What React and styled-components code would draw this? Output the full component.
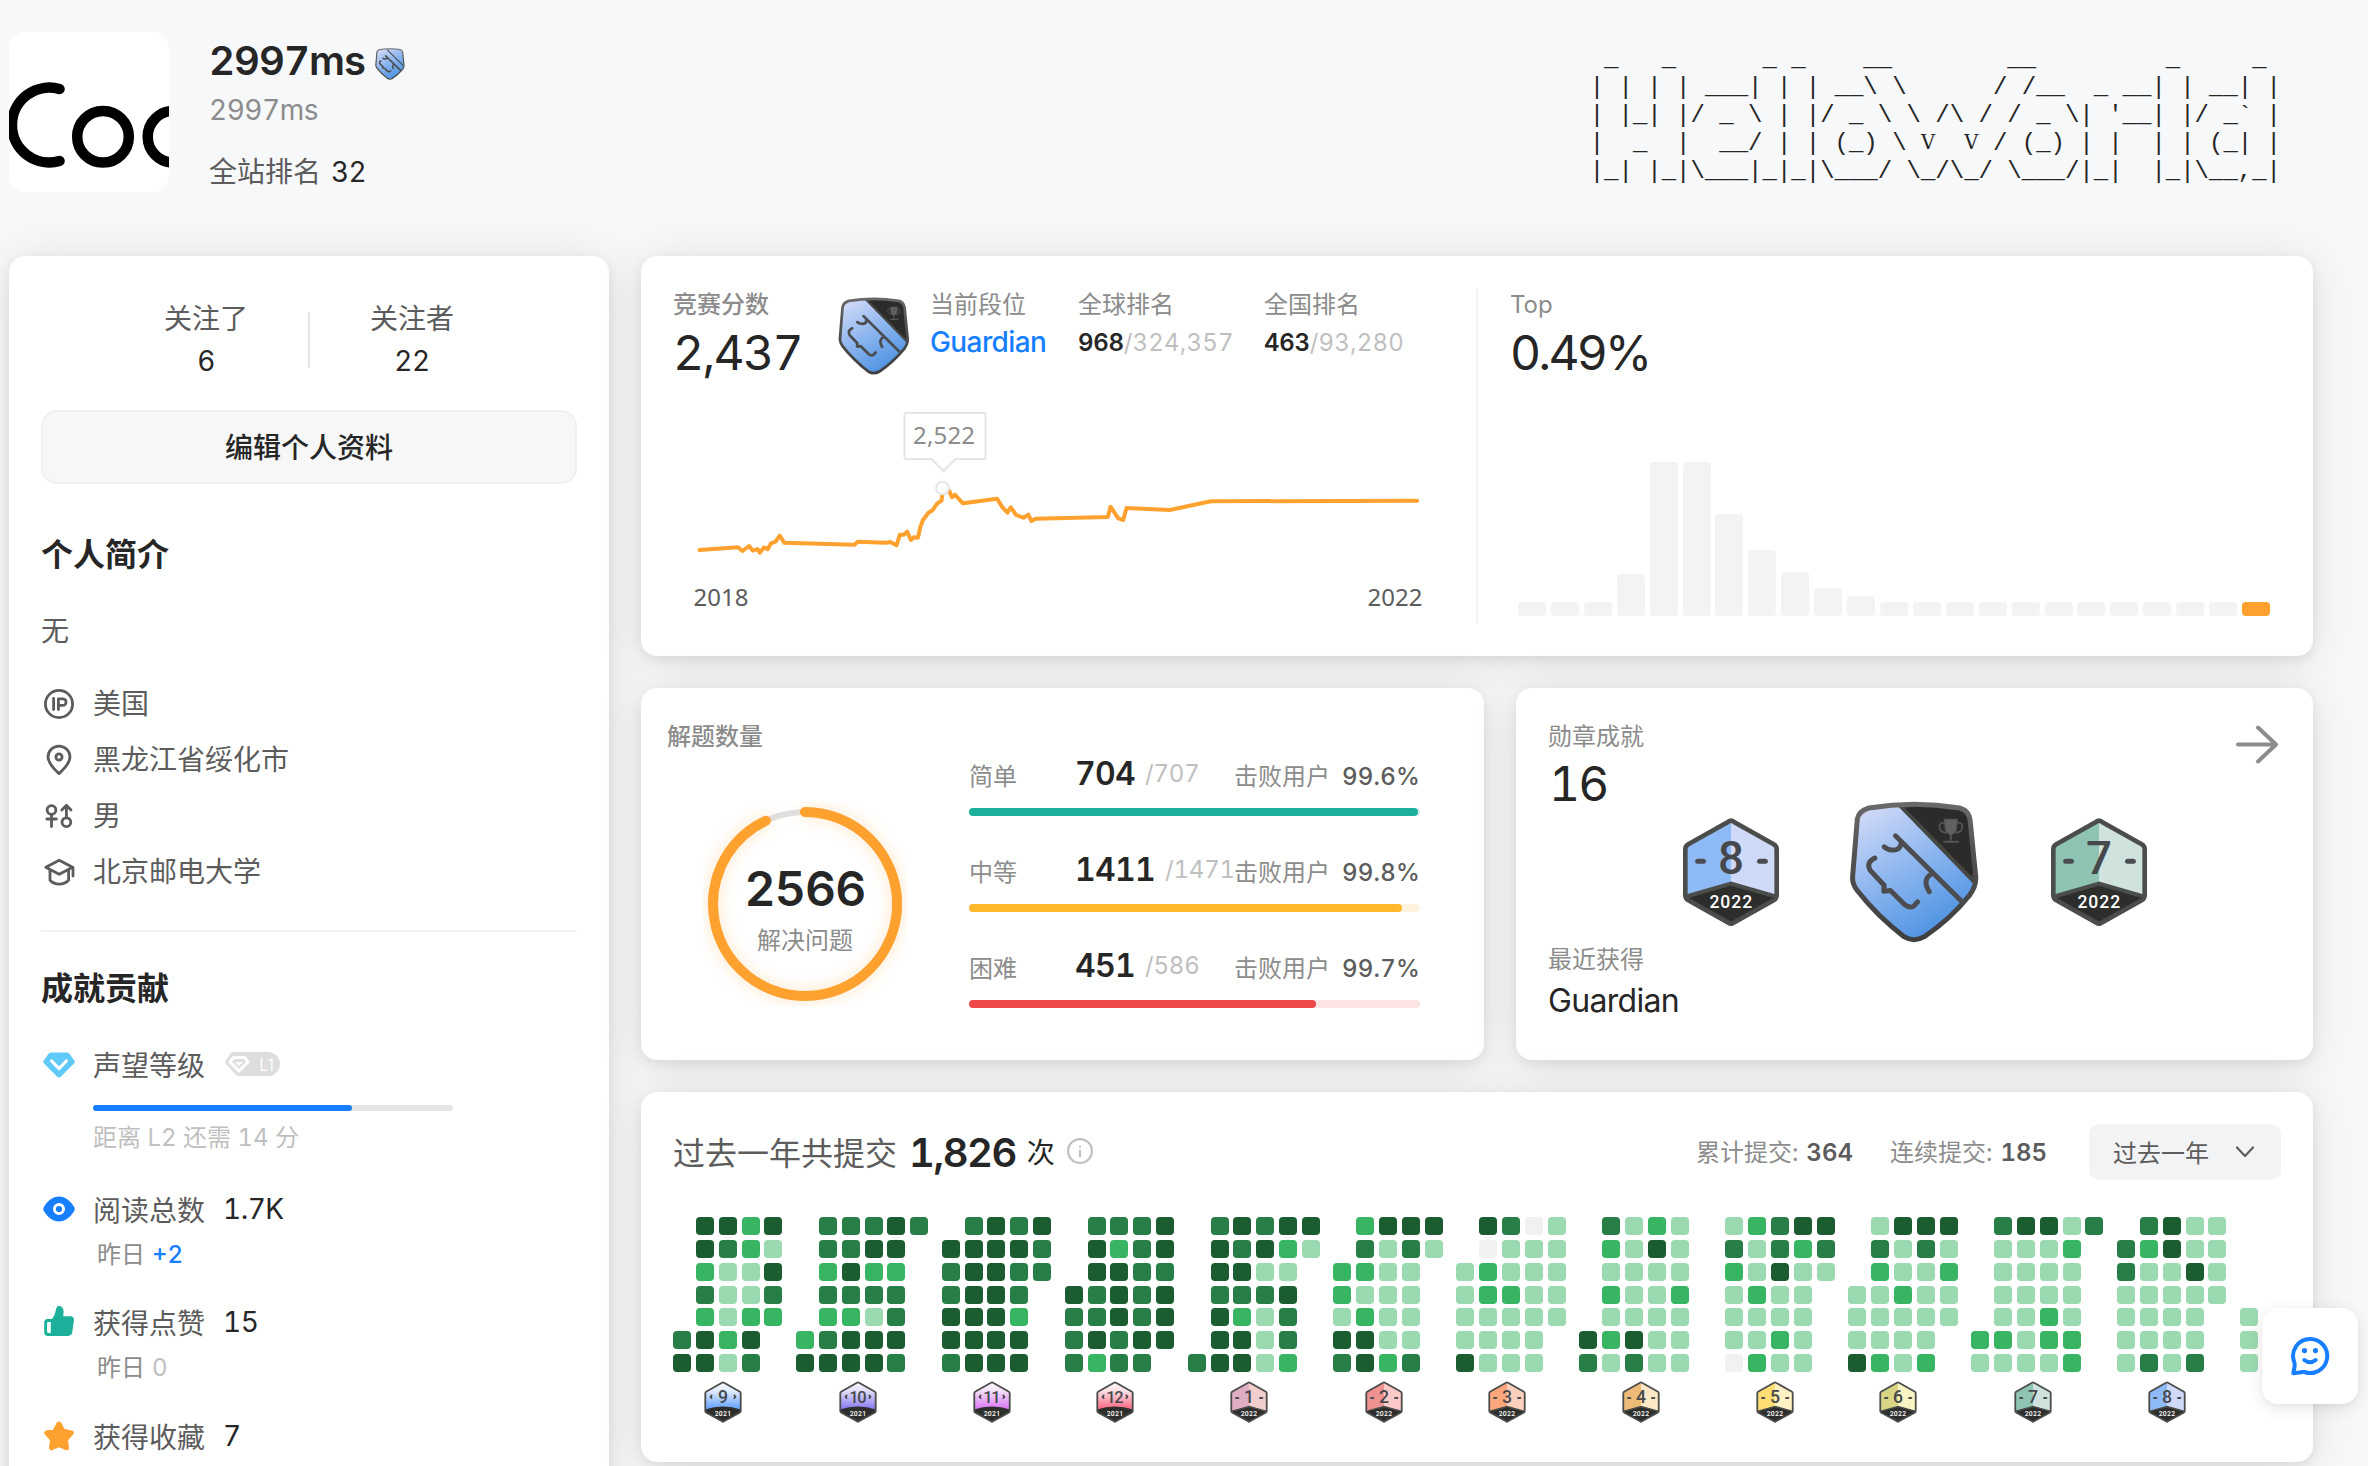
import React from "react";
import styled, { createGlobalStyle, css } from "styled-components";

const GlobalStyle = createGlobalStyle`
  *, *::before, *::after { box-sizing: border-box; }
  html, body { margin: 0; padding: 0; }
  body {
    background: #f7f8fa;
    color: #262626;
    font-family: Inter, "Noto Sans CJK SC", sans-serif;
    font-size: 28px;
    font-variant-numeric: tabular-nums;
    -webkit-font-smoothing: antialiased;
  }
  svg { display: block; flex: none; }
`;

const Page = styled.div`
  width: 2368px;
  height: 1466px;
  overflow: hidden;
  padding-left: 9px;
  background: #f7f8fa;
`;

/* ---------- header ---------- */

const Header = styled.header`
  display: flex;
  width: 2304px;
  height: 256px;
  padding-top: 32px;
`;

const Avatar = styled.div`
  width: 160px;
  height: 160px;
  border-radius: 16px;
  background: #fff;
  overflow: hidden;
  flex: none;
`;

const Identity = styled.div`
  margin-left: 40px;
  flex: 1;
`;

const DisplayName = styled.h1`
  display: flex;
  align-items: center;
  gap: 10px;
  margin: 0;
  height: 58px;
  font-size: 40px;
  font-weight: 600;
  letter-spacing: -0.9px;
  line-height: 58px;
  svg { margin-top: 5px; }
`;

const Handle = styled.div`
  color: #8c8c8c;
  line-height: 40px;
  letter-spacing: -0.5px;
`;

const SiteRank = styled.div`
  display: flex;
  gap: 10px;
  margin-top: 20px;
  color: #5c5c5c;
  line-height: 44px;
  strong { color: #262626; font-weight: 400; letter-spacing: -0.6px; }
`;

const AsciiArt = styled.pre`
  margin: 14px 32px 0 0;
  font-family: "Liberation Mono", monospace;
  font-size: 24px;
  line-height: 28px;
  color: #262626;
`;

const SerifV = styled.span`
  display: inline-block;
  width: 14.4px;
  text-align: center;
  line-height: 20px;
  vertical-align: 1px;
  font-family: "DejaVu Serif", serif;
  font-size: 19.5px;
`;

/* ---------- shared ---------- */

const Main = styled.main`
  display: grid;
  grid-template-columns: 600px 1672px;
  column-gap: 32px;
`;

const Card = styled.section`
  background: #fff;
  border-radius: 16px;
  box-shadow: 0 4px 12px rgba(0, 0, 0, 0.08), 0 4px 48px rgba(0, 0, 0, 0.1);
`;

const Caption = styled.div`
  font-size: 24px;
  line-height: 36px;
  color: #8c8c8c;
  white-space: nowrap;
  font-weight: ${(p) => (p.$medium ? 500 : 400)};
`;

const BigNumber = styled.div`
  padding-left: ${(p) => p.$indent || 0}px;
  font-size: 48px;
  line-height: ${(p) => p.$line || 60}px;
  letter-spacing: ${(p) => p.$track || 0}px;
`;

/* ---------- profile column ---------- */

const ProfileCard = styled(Card)`
  height: 1300px;
  padding: 41px 32px;
`;

const Follow = styled.div`
  display: grid;
  grid-template-columns: 82px 2px 82px;
  justify-content: center;
  column-gap: 61px;
  text-align: center;
`;

const FollowStat = styled.div`
  display: flex;
  flex-direction: column;
  align-items: center;
  color: #5c5c5c;
  line-height: 44px;
  white-space: nowrap;
  strong { display: block; color: #262626; font-weight: 400; line-height: 40px; letter-spacing: -0.5px; }
`;

const FollowRule = styled.div`
  width: 2px;
  height: 56px;
  margin-top: 15px;
  background: #e5e5e5;
`;

const EditButton = styled.button`
  display: block;
  width: 100%;
  height: 74px;
  margin-top: 29px;
  padding: 0 0 3px;
  border: 2px solid #f0f0f0;
  border-radius: 16px;
  background: #f7f7f7;
  color: #262626;
  font: 500 28px Inter, "Noto Sans CJK SC", sans-serif;
`;

const SectionTitle = styled.h2`
  margin: ${(p) => p.$top}px 0 0;
  font-size: 32px;
  font-weight: 600;
  line-height: 44px;
`;

const Bio = styled.p`
  margin: 34px 0 25px;
  line-height: 40px;
  color: #5c5c5c;
`;

const InfoRow = styled.div`
  display: flex;
  align-items: center;
  gap: 18px;
  height: 56px;
  padding-left: 2px;
  line-height: 40px;
  color: #5c5c5c;
  span { margin-top: -1px; }
`;

const Rule = styled.hr`
  height: 2px;
  margin: 30px 0 0;
  border: 0;
  background: #f2f2f2;
`;

const Contribution = styled.div`
  display: flex;
  align-items: center;
  gap: 18px;
  height: 44px;
  margin-top: ${(p) => p.$top}px;
  padding-left: 2px;
  color: #5c5c5c;
  strong { color: #262626; font-weight: 400; letter-spacing: -0.5px; }
`;

const LevelTrack = styled.div`
  width: 360px;
  height: 6px;
  margin: 19px 0 9px 52px;
  border-radius: 3px;
  background: #e5e5e5;
`;

const LevelFill = styled.div`
  width: 259px;
  height: 6px;
  border-radius: 3px;
  background: #177fff;
`;

const LevelHint = styled(Caption)`
  padding-left: 52px;
  color: #bfbfbf;
`;

const Yesterday = styled(Caption)`
  display: flex;
  gap: 7px;
  margin-top: 6px;
  padding-left: 56px;
  span { color: ${(p) => (p.$gain ? "#177fff" : "#bfbfbf")}; font-weight: ${(p) => (p.$gain ? 500 : 400)}; }
`;

/* ---------- dashboard column ---------- */

const Dashboard = styled.div`
  display: flex;
  flex-direction: column;
  gap: 32px;
`;

const ContestCard = styled(Card)`
  display: grid;
  grid-template-columns: 835px 2px 1fr;
  height: 400px;
  padding: 31px 0 32px;
`;

const RatingPane = styled.div`
  padding-left: 32px;
`;

const RatingHead = styled.div`
  display: grid;
  grid-template-columns: 164px 93px 148px 186px auto;
  height: 113px;
  & > svg { margin: 10px 0 0 1px; }
`;

const League = styled.div`
  font-size: 28px;
  line-height: 39px;
  letter-spacing: -0.6px;
  font-weight: 500;
  color: #177fff;
`;

const RankValue = styled.div`
  font-size: 24px;
  line-height: 40px;
  letter-spacing: ${(p) => p.$track}px;
  color: #bfbfbf;
  white-space: nowrap;
  strong { color: #262626; font-weight: 600; letter-spacing: -0.3px; }
`;

const PaneRule = styled.div`
  width: 2px;
  height: 336px;
  margin-top: 1px;
  background: #f2f3f4;
`;

const TopPane = styled.div`
  display: flex;
  flex-direction: column;
  padding: 0 43px 8px 32px;
`;

const Histogram = styled.div`
  display: flex;
  align-items: flex-end;
  justify-content: space-between;
  flex: 1;
  padding-left: 8px;
`;

const HistBar = styled.div`
  width: 28px;
  height: ${(p) => p.$h}px;
  border-radius: 4px;
  background: ${(p) => (p.$current ? "#ffa12e" : "#f2f3f4")};
`;

const Pair = styled.div`
  display: grid;
  grid-template-columns: 843px 797px;
  column-gap: 32px;
`;

const SolvedCard = styled(Card)`
  height: 372px;
  padding: 31px 26px;
`;

const SolvedBody = styled.div`
  display: flex;
  padding: 1px 38px 0 36px;
`;

const RingBox = styled.div`
  display: grid;
  width: 204px;
  height: 204px;
  margin: 46px 62px 0 0;
  & > * { grid-area: 1 / 1; }
`;

const RingLabel = styled.div`
  padding-top: 58px;
  text-align: center;
  strong { display: block; margin-bottom: 5px; font-size: 48px; font-weight: 600; line-height: 58px; letter-spacing: -0.8px; }
`;

const Levels = styled.div`
  display: flex;
  flex-direction: column;
  gap: 36px;
  width: 451px;
`;

const LevelRow = styled.div`
  display: grid;
  grid-template-columns: 106px 1fr auto;
  align-items: center;
  height: 40px;
  margin-bottom: 12px;
  white-space: nowrap;
`;

const LevelName = styled(Caption)`
  padding-top: 2px;
`;

const Count = styled.div`
  display: flex;
  align-items: center;
  gap: 10px;
  width: 0;
  margin-top: -6px;
  font-size: 24px;
  letter-spacing: -0.2px;
  color: #bfbfbf;
  strong { color: #262626; font-size: 32px; font-weight: 600; letter-spacing: -0.7px; }
`;

const Beats = styled(Caption)`
  display: flex;
  gap: 12px;
  padding-top: 2px;
  strong { color: #5c5c5c; font-weight: 500; letter-spacing: 0.2px; }
`;

const LevelBar = styled.div`
  height: 8px;
  border-radius: 4px;
  background: ${(p) => p.$track};
  div { height: 8px; border-radius: 4px; background: ${(p) => p.$fill}; }
`;

const MedalCard = styled(Card)`
  height: 372px;
  padding: 31px 32px;
`;

const MedalHead = styled.div`
  display: flex;
  justify-content: space-between;
  height: 82px;
  & > svg { margin: 5px 3px 0 0; }
`;

const MedalRow = styled.div`
  display: flex;
  align-items: center;
  justify-content: center;
  gap: 69.5px;
  height: 141px;
`;

const LatestMedal = styled.div`
  font-size: 32px;
  line-height: 46px;
  letter-spacing: -0.7px;
`;

const ActivityCard = styled(Card)`
  height: 370px;
  padding: 32px 32px 0;
`;

const ActivityHead = styled.div`
  display: flex;
  align-items: center;
  height: 56px;
`;

const ActivityTitle = styled.div`
  display: flex;
  align-items: center;
  flex: 1;
  margin-top: -2px;
  font-size: 32px;
  color: #5c5c5c;
  strong { margin: 2px 11px 0 12px; font-size: 40px; font-weight: 600; color: #262626; letter-spacing: -1.5px; }
  span { margin-right: 12px; font-size: 28px; color: #262626; }
`;

const Tally = styled(Caption)`
  display: flex;
  gap: 8px;
  margin: 2px ${(p) => p.$right}px 0 0;
  strong { color: #5c5c5c; font-weight: 600; }
`;

const RangeButton = styled.button`
  display: flex;
  align-items: center;
  justify-content: space-between;
  width: 192px;
  height: 56px;
  padding: 0 26px 2px 24px;
  border: 0;
  border-radius: 10px;
  background: #f2f3f4;
  color: #5c5c5c;
  font: 400 24px Inter, "Noto Sans CJK SC", sans-serif;
`;

const Heatmap = styled.div`
  display: flex;
  gap: 13.53px;
  margin-top: 37px;
`;

const Month = styled.div`
  display: flex;
  flex-direction: column;
  align-items: center;
  & > svg { margin: 9px 9px 0 0; }
`;

const Days = styled.div`
  display: grid;
  grid-template-columns: repeat(${(p) => p.$cols}, 18px);
  grid-auto-rows: 18px;
  gap: 4.87px;
`;

const dayColors = { D: "#1b5c31", M: "#277e46", L: "#38b562", P: "#9bd9b0", G: "#f1f1f1" };

const Day = styled.i`
  border-radius: 4px;
  ${(p) => dayColors[p.$level] && css`background: ${dayColors[p.$level]};`}
`;

const FeedbackButton = styled.button`
  position: fixed;
  left: 2262px;
  top: 1308px;
  display: grid;
  place-items: center;
  width: 96px;
  height: 96px;
  padding: 0;
  border: 0;
  border-radius: 16px;
  background: #fff;
  box-shadow: 0 4px 16px rgba(0, 0, 0, 0.1), 0 2px 6px rgba(0, 0, 0, 0.04);
`;

/* ---------- drawings ---------- */

function AvatarArt() {
  return (
    <svg width="160" height="160" viewBox="0 0 160 160" fill="none" stroke="#000" strokeWidth="10.5" strokeLinecap="round">
      <path d="M50.5 57 A37.4 37.4 0 1 0 50.5 129" />
      <circle cx="94" cy="104.7" r="25.8" />
      <circle cx="164.5" cy="104.7" r="25.8" />
    </svg>
  );
}

function Shield({ width, height, id, plain }) {
  return (
    <svg width={width} height={height} viewBox="535 33 395 428" preserveAspectRatio="none" fill="none">
      <defs>
        <linearGradient id={`${id}-face`} x1="0.1" y1="0" x2="0.65" y2="1">
          <stop offset="0" stopColor="#d9def8" />
          <stop offset="0.5" stopColor="#8db6ef" />
          <stop offset="1" stopColor="#478fe0" />
        </linearGradient>
        <linearGradient id={`${id}-rim`} x1="0" y1="0" x2="0" y2="1">
          <stop offset="0" stopColor="#696969" />
          <stop offset="0.4" stopColor="#505050" />
          <stop offset="1" stopColor="#3f3f3f" />
        </linearGradient>
        <clipPath id={`${id}-clip`}>
          <path d="M560 88Q564 64 595 54Q731 32 868 54Q896 62 900 90L917 260Q920 288 898 318Q840 390 762 442Q731 460 701 442Q620 380 560 303Q544 282 546 260Z" />
        </clipPath>
      </defs>
      <g clipPath={`url(#${id}-clip)`}>
        <rect x="535" y="33" width="395" height="428" fill={`url(#${id}-face)`} />
        {!plain && <path d="M690 48L912 276L930 30Z" fill="#2b2b29" stroke="#464645" strokeWidth="12" />}
      </g>
      <path
        d="M560 88Q564 64 595 54Q731 32 868 54Q896 62 900 90L917 260Q920 288 898 318Q840 390 762 442Q731 460 701 442Q620 380 560 303Q544 282 546 260Z"
        stroke={`url(#${id}-rim)`}
        strokeWidth="15"
      />
      <g stroke="#4b4d50" strokeWidth={plain ? 20 : 15} strokeLinecap="round" strokeLinejoin="round">
        <path d="M675 138L875 336" />
        <path d="M641 171Q654 182 672 181Q690 178 692 162" />
        <path d="M613 205Q585 219 599 242L641 287L640 305L660 303L703 346Q718 357 730 350L742 337" />
        <path d="M785 252Q754 270 777 306" />
        {plain && <path d="M700 60L900 262" strokeWidth="14" />}
      </g>
      {!plain && (
        <g fill="#606060" stroke="#565656">
          <path d="M822 88H862L858 122Q842 148 826 122Z" strokeWidth="3" />
          <path d="M822 98Q803 98 809 117Q813 128 828 129M862 98Q881 98 875 117Q871 128 856 129" fill="none" strokeWidth="5" />
          <path d="M842 134V152M820 156H866" fill="none" strokeWidth="6" />
        </g>
      )}
    </svg>
  );
}

const hexOutline = "M172 94Q180 88 188 94L309 162Q318 167 318 177V315Q318 325 309 330L188 397Q180 403 172 397L51 330Q42 325 42 315V177Q42 167 51 162Z";

function MonthBadge({ month, year, left, right, width = 38, height = 42, arched, id }) {
  const small = width < 50;
  return (
    <svg width={width} height={height} viewBox="32 80 296 330" preserveAspectRatio="none" fill="none">
      <defs>
        <clipPath id={`${id}-clip`}><path d={hexOutline} /></clipPath>
        <linearGradient id={`${id}-fade`} x1="0" y1="0" x2="0" y2="1">
          <stop offset="0" stopColor="#fff" />
          <stop offset="0.25" stopColor={right} />
          <stop offset="0.7" stopColor={left} />
        </linearGradient>
      </defs>
      <g clipPath={`url(#${id}-clip)`}>
        {arched ? (
          <rect x="32" y="80" width="296" height="330" fill={`url(#${id}-fade)`} />
        ) : (
          <>
            <rect x="32" y="80" width="148" height="330" fill={left} />
            <rect x="180" y="80" width="148" height="330" fill={right} />
          </>
        )}
        {arched ? (
          <path d="M32 306Q180 256 328 306V420H32Z" fill="#2d2e2c" />
        ) : (
          <path d="M32 322L180 280L328 322V420H32Z" fill="#2d2e2c" stroke="#4b4d4a" strokeWidth="12" />
        )}
      </g>
      <path d={hexOutline} stroke="#4b4d4a" strokeWidth="14" />
      {arched ? (
        <g stroke="#454545" strokeWidth="13" strokeLinecap="round">
          <path d="M92 193L83 204L92 215" /><path d="M268 193L277 204L268 215" />
        </g>
      ) : (
        <g stroke="#4a4c50" strokeWidth="15" strokeLinecap="round">
          <path d="M79 213H97" /><path d="M266 213H284" />
        </g>
      )}
      <text x={month > 9 ? 175 : 180} y="252" textAnchor="middle" fontFamily="Roboto, Inter, sans-serif" fontSize={month > 9 ? 128 : 138}
        fontWeight="500" fill="#46484c" letterSpacing={month > 9 ? -10 : 0}>{month}</text>
      <text x="181" y={small ? 354 : 352} textAnchor="middle" fontFamily="Roboto, Inter, sans-serif" fontSize="53" fontWeight="500"
        fill="#fff" letterSpacing="3">{year}</text>
    </svg>
  );
}

const line = { fill: "none", stroke: "#5c5c5c", strokeWidth: 2.8, strokeLinecap: "round", strokeLinejoin: "round" };

const IpIcon = () => (
  <svg width="32" height="32" viewBox="0 0 32 32" {...line}>
    <circle cx="16" cy="16" r="13.6" />
    <path d="M10.6 10.5V21.6" />
    <path d="M15.4 21.6V10.8H19.8A3.2 3.2 0 0 1 19.8 17.4H15.6" />
  </svg>
);

const PinIcon = () => (
  <svg width="32" height="32" viewBox="0 0 32 32" {...line}>
    <path d="M16 29.6C11 25 5 18.500 5 13A11 10.800 0 0 1 27 13C27 18.500 21 25 16 29.600Z" />
    <circle cx="16" cy="13" r="3.100" />
  </svg>
);

const GenderIcon = () => (
  <svg width="32" height="32" viewBox="0 0 32 32" {...line}>
    <circle cx="8.500" cy="10" r="4.400" />
    <path d="M8.500 14.500V26.500M3.800 19H13.400" />
    <circle cx="23.400" cy="22.200" r="4.400" />
    <path d="M23.400 17.500V5.600M18.800 10L23.400 5.300L28 10" />
  </svg>
);

const SchoolIcon = () => (
  <svg width="32" height="32" viewBox="0 0 32 32" {...line}>
    <path d="M2.800 11.200L16.200 4.200L29.600 11.200L16.200 18.300Z" />
    <path d="M7 14.100V24.200C12 29.400 20.400 29.400 25.600 24.200V14.100" />
    <path d="M30 11.600V20.100" />
  </svg>
);

const ReputationIcon = () => (
  <svg width="32" height="32" viewBox="0 0 32 32" fill="none">
    <path d="M8 4.500H24Q25.400 4.500 26.200 5.600L31.300 12.400Q32.300 14 31 15.500L18 28.600Q16 30.400 14 28.600L1 15.500Q-.3 14 .7 12.400L5.800 5.600Q6.600 4.500 8 4.500Z" fill="#5fc9fa" />
    <path d="M8.600 13L16 20.600L23.400 13" stroke="#fff" strokeWidth="3.200" strokeLinecap="round" strokeLinejoin="round" />
  </svg>
);

const ViewsIcon = () => (
  <svg width="32" height="32" viewBox="0 0 33 32">
    <path d="M16.500 3C23 3 28.500 7.600 32 13.600Q33.400 16 32 18.400C28.500 24.400 23 29 16.500 29S4.500 24.400 1 18.400Q-.4 16 1 13.600C4.500 7.600 10 3 16.500 3Z" fill="#177fff" />
    <circle cx="16.500" cy="16" r="4.700" fill="none" stroke="#fff" strokeWidth="3" />
  </svg>
);

const ThumbIcon = () => (
  <svg width="32" height="32" viewBox="0 0 32 32">
    <path d="M15.800 -.2Q20.600 .6 20.600 5.700L20.300 10.200H27.400Q31.300 10.400 30.900 14.200L29.300 26.100Q28.700 29.900 25 29.900H4.500Q1.200 29.800 1.200 26.600V16.200Q1.200 13 4.500 12.900H9Q11.600 10 13 3.500Q13.900 -.4 15.800 -.2Z" fill="#1cb09a" />
    <path d="M5.200 15.900H7.800V27H5.200Q4.100 27 4.100 25.600V17.300Q4.100 15.900 5.200 15.900Z" fill="#fff" />
  </svg>
);

const StarIcon = () => (
  <svg width="32" height="32" viewBox="0 0 32 32">
    <path d="M16 4L19.900 11.300L28.300 12.900L22.500 19.200L23.500 27.800L16 24.400L8.500 27.800L9.500 19.200L3.700 12.900L12.100 11.300Z"
      fill="#ffa12e" stroke="#ffa12e" strokeWidth="5" strokeLinejoin="round" />
  </svg>
);

const PillSvg = styled.svg`
  margin-left: 2px;
  overflow: visible;
`;

const LevelPill = () => (
  <PillSvg width="55" height="24" viewBox="0 0 55 24">
    <path d="M8 0H43A12 12 0 0 1 43 24H14Q12 24 10.500 22.500L1 12Q-.3 10 1 8L5 2Q6 0 8 0Z" fill="#dedede" />
    <path d="M8.500 5.500H19.500L23 10L14 19L5 10Z" fill="none" stroke="#fff" strokeWidth="3" strokeLinejoin="round" />
    <path d="M10 10H18L14 14Z" fill="#fff" />
    <text x="34.500" y="19" fontFamily="Roboto, sans-serif" fontSize="19" fill="#fff" textLength="16" lengthAdjust="spacingAndGlyphs">L1</text>
  </PillSvg>
);

const ArrowIcon = () => (
  <svg width="44" height="40" viewBox="0 0 44 40" fill="none" stroke="#8c8c8f" strokeWidth="4" strokeLinecap="round" strokeLinejoin="round">
    <path d="M4 20.500H41M24 3.500L42 20.500L24 37.500" />
  </svg>
);

const InfoIcon = () => (
  <svg width="26" height="26" viewBox="0 0 26 26" fill="none" stroke="#bfbfbf" strokeWidth="2.200" strokeLinecap="round">
    <circle cx="13" cy="13" r="11.900" />
    <path d="M13 12.500V18.300M13 8.500V8.700" />
  </svg>
);

const ChevronIcon = () => (
  <svg width="20" height="14" viewBox="0 0 20 14" fill="none" stroke="#5c5c5c" strokeWidth="2.200" strokeLinecap="round" strokeLinejoin="round">
    <path d="M2 3.500L10 12L18 3.500" />
  </svg>
);

const FeedbackIcon = () => (
  <svg width="42" height="42" viewBox="0 0 42 42" fill="none" stroke="#177fff" strokeWidth="4" strokeLinecap="round" strokeLinejoin="round">
    <path d="M21 4A17 17 0 1 1 15.500 37Q13 36.600 10 37.500L4.300 38.200L5.600 31.500Q5.900 29 5.200 27A17 17 0 0 1 21 4Z" />
    <path d="M15.300 25Q21 29.400 26.700 25" />
    <path d="M15.500 15.500V15.600M26.500 15.500V15.600" strokeWidth="5.200" />
  </svg>
);

const ratingPoints =
  "700,550 738.600,547.300 743,551 749.600,546 753.400,550.700 757.800,549 760.500,552.700 764.400,547.300 768.200,549.300 771.500,543.300 776,541.700 780.300,535.700 784.700,542.700 854.900,544.700 858.200,541.700 886.700,542.700 890.600,542 897,545.300 900.400,534.700 904.300,534.700 907.600,531.700 911.400,540 914,537.300 918.500,537.700 920.700,527.300 923.500,520 929,512.700 933.300,510 937.200,504 942,500.700 943.200,492 949.800,491 952.500,497.300 955.300,494.700 963.500,503.300 997.500,498.700 1003,507.300 1008,512.700 1011.200,507.300 1016.700,515 1023.900,517.700 1028.800,514.700 1032,521 1036,518.700 1108.300,517 1111,506.700 1118.800,518.300 1123.700,520 1127,508 1170.300,510 1211.500,501.300 1417.700,500.700";

function RatingChart() {
  return (
    <svg width="771" height="224" viewBox="673.5 400 771 224" fontFamily="'Noto Sans', sans-serif" fontSize="24">
      <polyline points={ratingPoints} fill="none" stroke="#ffa12e" strokeWidth="4" strokeLinejoin="round" strokeLinecap="round" />
      <circle cx="943" cy="488" r="6.300" fill="#fff" stroke="#e5e6e8" strokeWidth="2" />
      <path d="M907 413H984Q986 413 986 415V457Q986 459 984 459H956L944 471L932 459H907Q905 459 905 457V415Q905 413 907 413Z" fill="#fff" stroke="#e5e5e5" strokeWidth="2" />
      <text x="944.500" y="444" textAnchor="middle" fill="#8c8c8c" textLength="62">2,522</text>
      <text x="694" y="606" fill="#5c5c5c" textLength="55">2018</text>
      <text x="1368" y="606" fill="#5c5c5c" textLength="55">2022</text>
    </svg>
  );
}

const RingArc = styled.circle`
  filter: drop-shadow(0 0 8px rgba(255, 161, 46, 0.3));
`;

function Ring() {
  return (
    <svg width="204" height="204" viewBox="-102 -102 204 204" fill="none">
      <circle r="92" stroke="#e0e0e0" strokeWidth="6" />
      <RingArc r="92" stroke="#ffa12e" strokeWidth="10" strokeLinecap="round" pathLength="1000" strokeDasharray="930 1000" transform="rotate(-90)" />
    </svg>
  );
}

/* ---------- data ---------- */

const levels = [
  { name: "简单", done: "704", all: "/707", beats: "99.6%", share: 0.996, fill: "#1cb09a", track: "#d4f1ed" },
  { name: "中等", done: "1411", all: "/1471", beats: "99.8%", share: 0.959, fill: "#ffb72b", track: "#fff3df" },
  { name: "困难", done: "451", all: "/586", beats: "99.7%", share: 0.77, fill: "#ee4848", track: "#fce3e4" },
];

const histogram = [14, 14, 14, 42, 154, 154, 102, 66, 44, 28, 20, 14, 14, 14, 14, 14, 14, 14, 14, 14, 14, 14, 14];

const months = [
  { m: 9, y: 2021, left: "#5a9cff", right: "#dce8fb", rows: [".DDLD", ".DMLP", ".LPPD", ".MPPM", ".LPLL", "MDLD.", "DDPM."] },
  { m: 10, y: 2021, left: "#7f6ff0", right: "#dedcf9", rows: [".MMMDM", ".MMDD.", ".LDLL.", ".MMMM.", ".LLPM.", "LMDDD.", "DDDDM."] },
  { m: 11, y: 2021, left: "#d66df2", right: "#f3dcf9", rows: [".MDMD", "DDDDM", "MDDMM", "MDDM.", "DDDL.", "DDDD.", "MDDD."] },
  { m: 12, y: 2021, left: "#fb5c7c", right: "#fbdce1", rows: [".MMMD", ".DLMD", ".DDMM", "DMDMD", "MMDMD", "MDMDD", "MLMM."] },
  { m: 1, y: 2022, left: "#dfadc4", right: "#f2cdcd", rows: [".MDMDD", ".DMDLP", ".DDPP.", ".MMMD.", ".DLPM.", ".DDPM.", "MDDPL."] },
  { m: 2, y: 2022, left: "#ee9292", right: "#fcc9c9", rows: [".LDDD", ".MPMP", "LLPP.", "LPPP.", "PLPP.", "DDPP.", "MDLM."] },
  { m: 3, y: 2022, left: "#fca67c", right: "#fdd0bd", rows: [".DMGP", ".GPPP", "PLPPP", "PLLPP", "PPPPP", "PPPP.", "DPPP."] },
  { m: 4, y: 2022, left: "#ecbb78", right: "#fce8c4", rows: [".MPLP.", ".LPDP.", ".PPPP.", ".LPPL.", ".PPPP.", "DLDPP.", "MPMPP."] },
  { m: 5, y: 2022, left: "#ffde74", right: "#fff1c4", rows: ["PLMDD", "MPMLM", "LPDPP", "PLPP.", "PPPP.", "PPLP.", "GLPP."] },
  { m: 6, y: 2022, left: "#d8d585", right: "#f9f4c2", rows: [".PDDD", ".MPMP", ".LPPL", "PPLPP", "PPPPP", "PPPP.", "DLPL."] },
  { m: 7, y: 2022, left: "#8fc4b4", right: "#cfe2de", rows: [".MDDPM", ".PPPL.", ".PPPP.", ".PPPP.", ".PPLP.", "LLPLL.", "PPPPL."] },
  { m: 8, y: 2022, left: "#8fbaf8", right: "#cfd9f8", rows: [".MDPP", "MLDPP", "MPPDP", "PPPPP", "PPPP.", "PPPP.", "PMPM."] },
  { rows: [".", ".", ".", ".", "P", "P", "P"] },
];

function App() {
  return (
    <Page>
      <GlobalStyle />
      <Header>
        <Avatar><AvatarArt /></Avatar>
        <Identity>
          <DisplayName>2997ms<Shield id="mini" width={30} height={32} plain /></DisplayName>
          <Handle>2997ms</Handle>
          <SiteRank>全站排名<strong>32</strong></SiteRank>
        </Identity>
        <AsciiArt>
          {" _   _      _ _    __        __         _     _ \n"}
          {"| | | | ___| | | __\\ \\      / /__  _ __| | __| |\n"}
          {"| |_| |/ _ \\ | |/ _ \\ \\ /\\ / / _ \\| '__| |/ _` |\n"}
          {"|  _  |  __/ | | (_) \\ "}<SerifV>V</SerifV>{"  "}<SerifV>V</SerifV>{" / (_) | |  | | (_| |\n"}
          {"|_| |_|\\___|_|_|\\___/ \\_/\\_/ \\___/|_|  |_|\\__,_|"}
        </AsciiArt>
      </Header>

      <Main>
        <ProfileCard>
          <Follow>
            <FollowStat>关注了<strong>6</strong></FollowStat>
            <FollowRule />
            <FollowStat>关注者<strong>22</strong></FollowStat>
          </Follow>
          <EditButton>编辑个人资料</EditButton>

          <SectionTitle $top={49}>个人简介</SectionTitle>
          <Bio>无</Bio>
          <InfoRow><IpIcon /><span>美国</span></InfoRow>
          <InfoRow><PinIcon /><span>黑龙江省绥化市</span></InfoRow>
          <InfoRow><GenderIcon /><span>男</span></InfoRow>
          <InfoRow><SchoolIcon /><span>北京邮电大学</span></InfoRow>
          <Rule />

          <SectionTitle $top={35}>成就贡献</SectionTitle>
          <Contribution $top={31}><ReputationIcon />声望等级<LevelPill /></Contribution>
          <LevelTrack><LevelFill /></LevelTrack>
          <LevelHint>距离 L2 还需 14 分</LevelHint>
          <Contribution $top={31}><ViewsIcon />阅读总数<strong>1.7K</strong></Contribution>
          <Yesterday $gain>昨日<span>+2</span></Yesterday>
          <Contribution $top={27}><ThumbIcon />获得点赞<strong>15</strong></Contribution>
          <Yesterday>昨日<span>0</span></Yesterday>
          <Contribution $top={28}><StarIcon />获得收藏<strong>7</strong></Contribution>
        </ProfileCard>

        <Dashboard>
          <ContestCard>
            <RatingPane>
              <RatingHead>
                <div>
                  <Caption $medium>竞赛分数</Caption>
                  <BigNumber $track={-1.7}>2,437</BigNumber>
                </div>
                <Shield id="rank" width={72} height={78} />
                <div><Caption>当前段位</Caption><League>Guardian</League></div>
                <div><Caption>全球排名</Caption><RankValue $track={0.2}><strong>968</strong>/324,357</RankValue></div>
                <div><Caption>全国排名</Caption><RankValue $track={0.2}><strong>463</strong>/93,280</RankValue></div>
              </RatingHead>
              <RatingChart />
            </RatingPane>
            <PaneRule />
            <TopPane>
              <Caption>Top</Caption>
              <BigNumber $track={-2.8}>0.49%</BigNumber>
              <Histogram>
                {histogram.map((h, i) => <HistBar key={i} $h={h} $current={i === histogram.length - 1} />)}
              </Histogram>
            </TopPane>
          </ContestCard>

          <Pair>
            <SolvedCard>
              <Caption $medium>解题数量</Caption>
              <SolvedBody>
                <RingBox>
                  <Ring />
                  <RingLabel><strong>2566</strong><Caption>解决问题</Caption></RingLabel>
                </RingBox>
                <Levels>
                  {levels.map((l) => (
                    <div key={l.name}>
                      <LevelRow>
                        <LevelName>{l.name}</LevelName>
                        <Count><strong>{l.done}</strong>{l.all}</Count>
                        <Beats>击败用户<strong>{l.beats}</strong></Beats>
                      </LevelRow>
                      <LevelBar $track={l.track} $fill={l.fill}><div style={{ width: `${l.share * 100}%` }} /></LevelBar>
                    </div>
                  ))}
                </Levels>
              </SolvedBody>
            </SolvedCard>

            <MedalCard>
              <MedalHead>
                <div><Caption>勋章成就</Caption><BigNumber $line={57} $indent={1} $track={-2}>16</BigNumber></div>
                <ArrowIcon />
              </MedalHead>
              <MedalRow>
                <MonthBadge id="medal8" month={8} year={2022} left="#8fbaf8" right="#cfd9f8" width={98} height={110} />
                <Shield id="medal" width={131} height={142} />
                <MonthBadge id="medal7" month={7} year={2022} left="#8fc4b4" right="#cfe2de" width={98} height={110} />
              </MedalRow>
              <Caption>最近获得</Caption>
              <LatestMedal>Guardian</LatestMedal>
            </MedalCard>
          </Pair>

          <ActivityCard>
            <ActivityHead>
              <ActivityTitle>过去一年共提交<strong>1,826</strong><span>次</span><InfoIcon /></ActivityTitle>
              <Tally $right={37}>累计提交:<strong>364</strong></Tally>
              <Tally $right={42}>连续提交:<strong>185</strong></Tally>
              <RangeButton>过去一年<ChevronIcon /></RangeButton>
            </ActivityHead>
            <Heatmap>
              {months.map((mo, i) => (
                <Month key={i}>
                  <Days $cols={mo.rows[0].length}>
                    {mo.rows.join("").split("").map((d, j) => <Day key={j} $level={d} />)}
                  </Days>
                  {mo.m && <MonthBadge id={`month${i}`} month={mo.m} year={mo.y} left={mo.left} right={mo.right} arched={mo.y === 2021} />}
                </Month>
              ))}
            </Heatmap>
          </ActivityCard>
        </Dashboard>
      </Main>

      <FeedbackButton aria-label="反馈"><FeedbackIcon /></FeedbackButton>
    </Page>
  );
}

export default App;
